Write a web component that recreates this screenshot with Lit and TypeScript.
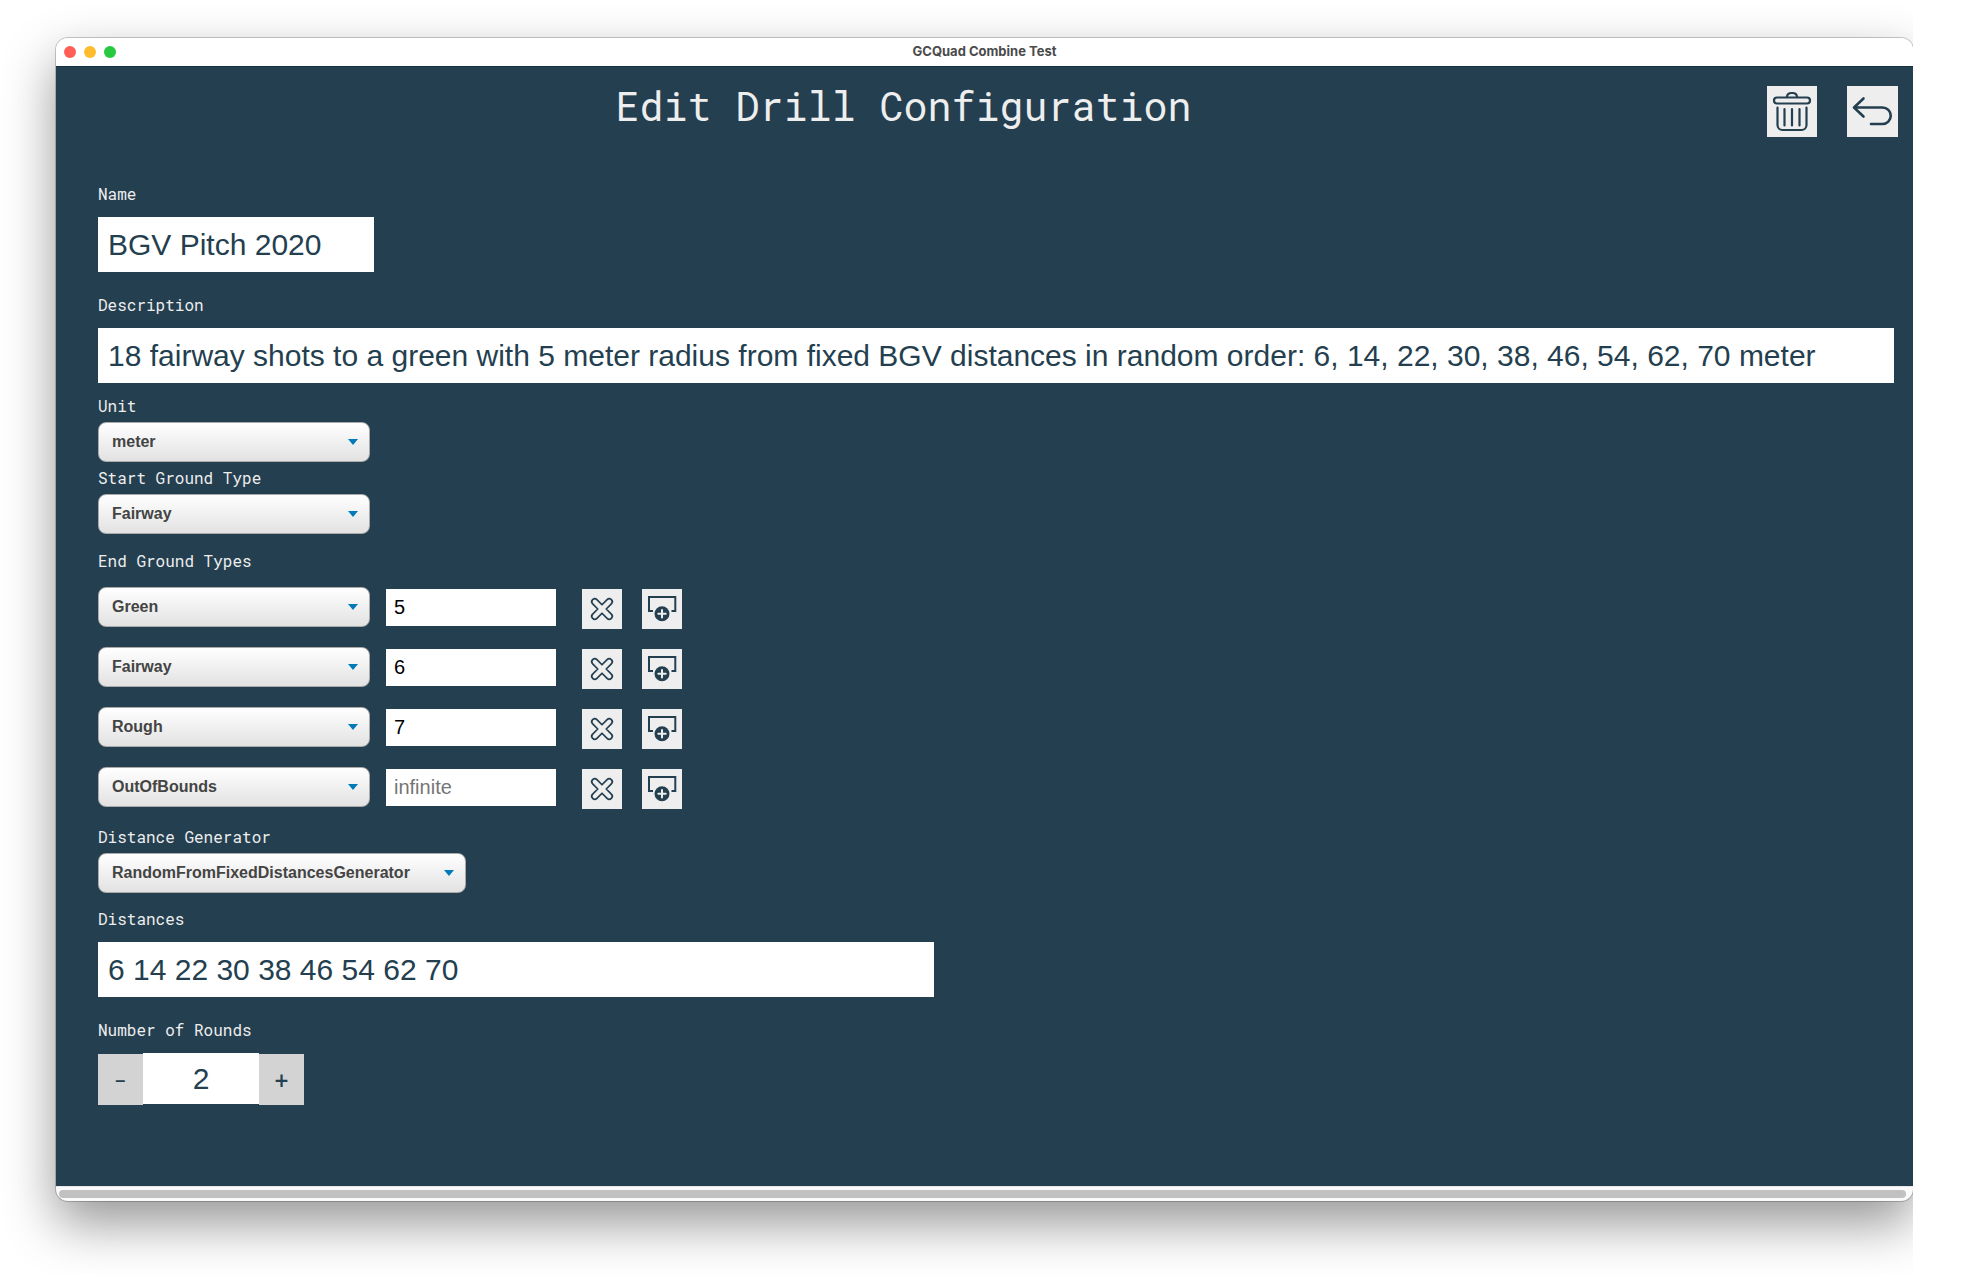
import { LitElement, html, css, svg } from "lit";
import { customElement, property, state } from "lit/decorators.js";

interface EndGround {
  type: string;
  radius: string;
}

const GROUND_TYPES = ["Green", "Fairway", "Rough", "OutOfBounds"];

const trashIcon = svg`
  <svg viewBox="0 0 50 51" width="50" height="51" fill="none" stroke="currentColor" stroke-width="2.200" stroke-linecap="round" stroke-linejoin="round" aria-hidden="true">
    <path d="M20 11V10.500A4.500 4 0 0 1 24.500 7h1A4.500 4 0 0 1 30 10.500V11" />
    <rect x="7" y="11.500" width="36" height="6" rx="3" />
    <path d="M10.500 21.500V39a5 5 0 0 0 5 5h19a5 5 0 0 0 5-5V21.500M17.500 23v16.500M25 23v16.500M32.500 23v16.500" />
  </svg>`;

const backIcon = svg`
  <svg viewBox="0 0 51 51" width="51" height="51" fill="none" stroke="currentColor" stroke-width="2.600" stroke-linecap="round" stroke-linejoin="round" aria-hidden="true">
    <path d="M16.500 12.500L7 21.500l9.500 9M7.500 21.500H35.500a8.250 8.250 0 0 1 0 16.500H24" />
  </svg>`;

const removeIcon = svg`
  <svg viewBox="0 0 40 40" width="40" height="40" fill="none" stroke="currentColor" stroke-width="1.700" stroke-linejoin="round" aria-hidden="true">
    <path transform="rotate(45 20 20)" d="M17 17V9.800a3 3 0 0 1 6 0V17h7.200a3 3 0 0 1 0 6H23v7.200a3 3 0 0 1-6 0V23H9.800a3 3 0 0 1 0-6z" />
  </svg>`;

const addIcon = svg`
  <svg viewBox="0 0 40 40" width="40" height="40" fill="none" stroke="currentColor" aria-hidden="true">
    <path stroke-width="2" d="M11 22H7V8H33.300V22H29.500" />
    <circle cx="20" cy="24.700" r="7.500" fill="currentColor" stroke="none" />
    <path stroke="#eeeeee" stroke-width="2" stroke-linecap="round" d="M20 21v7.400M16.300 24.700h7.400" />
  </svg>`;

@customElement("drill-select")
export class DrillSelect extends LitElement {
  @property() label = "";
  @property({ attribute: false }) caption = "";
  @property({ attribute: false }) options: string[] = [];
  @property() value = "";

  static styles = css`
    :host {
      display: block;
    }
    .caption {
      display: block;
      margin-bottom: 6px;
      font: 16px/20px "Roboto Mono", "DejaVu Sans Mono", monospace;
      color: #eeeeee;
    }
    .box {
      position: relative;
    }
    .box::after {
      content: "";
      position: absolute;
      right: 12px;
      top: 17px;
      border: 5px solid transparent;
      border-top: 6px solid #007ab8;
      border-bottom: 0;
      pointer-events: none;
    }
    .select {
      appearance: none;
      display: block;
      box-sizing: border-box;
      width: 100%;
      height: 40px;
      margin: 0;
      padding: 0 32px 0 13px;
      border: 1px solid #aaaaaa;
      border-radius: 8px;
      background: linear-gradient(#ffffff, #e2e2e2);
      color: #444444;
      font: bold 16px/20px "Liberation Sans", Arial, sans-serif;
    }
  `;

  render() {
    return html`
      ${this.caption ? html`<label class="caption" for="s">${this.caption}</label>` : ""}
      <div class="box">
        <select id="s" class="select" aria-label=${this.caption || this.label}>
          ${this.options.map((o) => html`<option ?selected=${o === this.value}>${o}</option>`)}
        </select>
      </div>
    `;
  }
}

@customElement("app-root")
export class AppRoot extends LitElement {
  @state() private grounds: EndGround[] = [
    { type: "Green", radius: "5" },
    { type: "Fairway", radius: "6" },
    { type: "Rough", radius: "7" },
    { type: "OutOfBounds", radius: "" },
  ];
  @state() private rounds = 2;

  static styles = css`
    :host {
      display: block;
      box-sizing: border-box;
      min-height: 100vh;
      padding-right: 56px;
      background: #ffffff;
    }
    .stage {
      box-sizing: border-box;
      min-height: 100vh;
      padding: 38px 0 72px 56px;
      overflow: hidden;
    }
    .window {
      overflow: hidden;
      border-radius: 12px;
      background: #fafafa;
      box-shadow: 0 0 0 1px rgba(0, 0, 0, 0.2), 0 22px 52px rgba(0, 0, 0, 0.42);
    }
    .titlebar {
      display: grid;
      grid-template-columns: 1fr auto 1fr;
      align-items: center;
      height: 28px;
      padding: 0 8px;
      background: #ffffff;
    }
    .lights {
      display: flex;
      gap: 8px;
    }
    .light {
      width: 12px;
      height: 12px;
      border-radius: 50%;
    }
    .red {
      background: #ff5f57;
    }
    .yellow {
      background: #febc2e;
    }
    .green {
      background: #28c840;
    }
    .window-title {
      padding-bottom: 2px;
      color: #4a4a4a;
      font: 700 13px/16px Inter, sans-serif;
    }
    .page {
      border-top: 1px solid #12303f;
      padding-bottom: 81px;
      background: #243f50;
      color: #eeeeee;
    }
    .header {
      display: flex;
      align-items: flex-start;
      padding: 14px 15px 0 0;
    }
    .title {
      flex: 1;
      margin: 0 16px 0 0;
      text-align: center;
      font: 40px/50px "Roboto Mono", "DejaVu Sans Mono", monospace;
    }
    .tools {
      display: flex;
      gap: 30px;
      padding-top: 5px;
    }
    .icon-button {
      display: block;
      margin: 0;
      padding: 0;
      border: 0;
      background: #eeeeee;
      color: #243f50;
    }
    .icon-button svg {
      display: block;
    }
    .form {
      padding: 47px 19px 0 42px;
    }
    .label {
      display: block;
      font: 16px/20px "Roboto Mono", "DejaVu Sans Mono", monospace;
    }
    .field {
      margin-bottom: 23px;
    }
    .field.tight {
      margin-bottom: 13px;
    }
    .input {
      display: block;
      box-sizing: border-box;
      width: 100%;
      height: 55px;
      margin: 13px 0 0;
      padding: 0 10px;
      border: 0;
      background: #ffffff;
      color: #243f50;
      font: 30px/36px "Liberation Sans", Arial, sans-serif;
    }
    .name {
      max-width: 276px;
    }
    .distances {
      max-width: 836px;
    }
    .short {
      max-width: 272px;
    }
    .unit {
      margin-bottom: 6px;
    }
    .start {
      margin-bottom: 17px;
    }
    .generator {
      max-width: 368px;
      margin-bottom: 16px;
    }
    .rows {
      display: grid;
      gap: 20px;
      margin: 16px 0 20px;
    }
    .row {
      display: flex;
      align-items: flex-start;
      gap: 20px;
      height: 40px;
    }
    .pair {
      display: flex;
      gap: 16px;
    }
    .ground {
      width: 272px;
    }
    .controls {
      display: flex;
      gap: 20px;
      padding-top: 2px;
    }
    .radius {
      box-sizing: border-box;
      width: 170px;
      height: 37px;
      margin: 2px 6px 0 0;
      padding: 0 8px;
      border: 0;
      background: #ffffff;
      color: #000000;
      font: 20px/24px "Liberation Sans", Arial, sans-serif;
    }
    .radius::placeholder {
      color: #757575;
    }
    .stepper {
      display: flex;
      margin-top: 13px;
    }
    .step {
      width: 45px;
      height: 51px;
      margin: 1px 0 0;
      padding: 0;
      border: 0;
      background: #d3d3d3;
      color: #243f50;
      font: 24px/32px "Roboto Mono", "DejaVu Sans Mono", monospace;
    }
    .count {
      box-sizing: border-box;
      width: 116px;
      height: 51px;
      padding: 0;
      border: 0;
      background: #ffffff;
      color: #243f50;
      text-align: center;
      font: 30px/36px "Liberation Sans", Arial, sans-serif;
    }
    .track {
      padding: 3px 7px 3px 3px;
      border-top: 1px solid #e8e8e8;
    }
    .thumb {
      height: 8px;
      border-radius: 4px;
      background: #c1c1c1;
    }
  `;

  private removeGround(index: number) {
    this.grounds = this.grounds.filter((_, i) => i !== index);
  }

  private addGround(index: number) {
    const next = [...this.grounds];
    next.splice(index + 1, 0, { type: "Green", radius: "" });
    this.grounds = next;
  }

  private renderGround(g: EndGround, i: number) {
    return html`
      <div class="row">
        <div class="pair">
          <drill-select class="ground" label="End ground type" .options=${GROUND_TYPES} .value=${g.type}></drill-select>
          <input class="radius" aria-label="Radius" placeholder="infinite" .value=${g.radius} />
        </div>
        <div class="controls">
          <button class="icon-button" type="button" aria-label="Remove" @click=${() => this.removeGround(i)}>${removeIcon}</button>
          <button class="icon-button" type="button" aria-label="Add below" @click=${() => this.addGround(i)}>${addIcon}</button>
        </div>
      </div>
    `;
  }

  render() {
    return html`
      <div class="stage">
        <div class="window">
          <div class="titlebar">
            <div class="lights">
              <span class="light red"></span>
              <span class="light yellow"></span>
              <span class="light green"></span>
            </div>
            <span class="window-title">GCQuad Combine Test</span>
          </div>
          <main class="page">
            <header class="header">
              <h1 class="title">Edit Drill Configuration</h1>
              <div class="tools">
                <button class="icon-button" type="button" aria-label="Delete">${trashIcon}</button>
                <button class="icon-button" type="button" aria-label="Back">${backIcon}</button>
              </div>
            </header>
            <form class="form" @submit=${(e: Event) => e.preventDefault()}>
              <div class="field">
                <label class="label" for="name">Name</label>
                <input class="input name" id="name" value="BGV Pitch 2020" />
              </div>
              <div class="field tight">
                <label class="label" for="description">Description</label>
                <input
                  class="input"
                  id="description"
                  value="18 fairway shots to a green with 5 meter radius from fixed BGV distances in random order: 6, 14, 22, 30, 38, 46, 54, 62, 70 meter"
                />
              </div>
              <drill-select class="short unit" .caption=${"Unit"} .options=${["meter", "yard"]} .value=${"meter"}></drill-select>
              <drill-select class="short start" .caption=${"Start Ground Type"} .options=${GROUND_TYPES} .value=${"Fairway"}></drill-select>
              <span class="label">End Ground Types</span>
              <div class="rows">${this.grounds.map((g, i) => this.renderGround(g, i))}</div>
              <drill-select
                class="generator"
                .caption=${"Distance Generator"}
                .options=${["RandomFromFixedDistancesGenerator", "FixedDistancesGenerator"]}
                .value=${"RandomFromFixedDistancesGenerator"}
              ></drill-select>
              <div class="field">
                <label class="label" for="distances">Distances</label>
                <input class="input distances" id="distances" value="6 14 22 30 38 46 54 62 70" />
              </div>
              <label class="label" for="rounds">Number of Rounds</label>
              <div class="stepper">
                <button class="step" type="button" aria-label="Fewer rounds" @click=${() => (this.rounds = Math.max(1, this.rounds - 1))}>-</button>
                <input class="count" id="rounds" inputmode="numeric" .value=${String(this.rounds)} />
                <button class="step" type="button" aria-label="More rounds" @click=${() => this.rounds++}>+</button>
              </div>
            </form>
          </main>
          <div class="track"><div class="thumb"></div></div>
        </div>
      </div>
    `;
  }
}
